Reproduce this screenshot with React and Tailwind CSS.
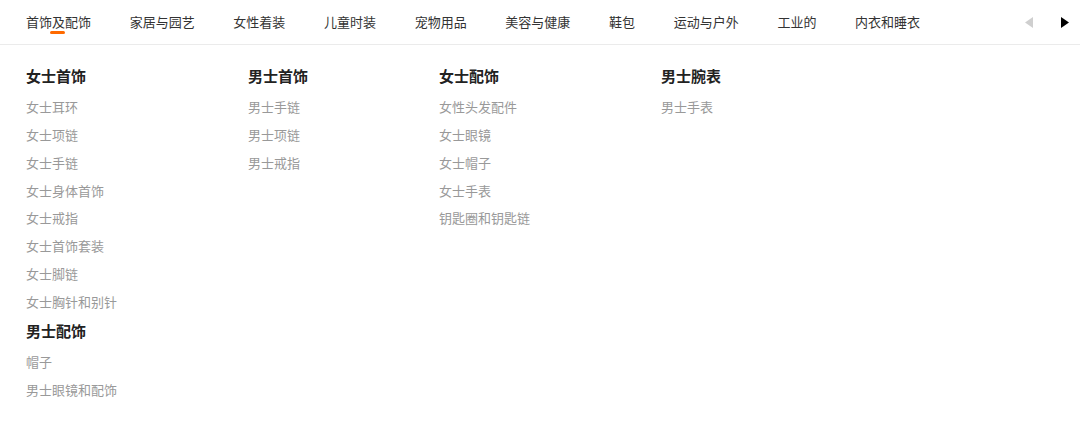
import React from "react";

const nav = ["首饰及配饰", "家居与园艺", "女性着装", "儿童时装", "宠物用品", "美容与健康", "鞋包", "运动与户外", "工业的", "内衣和睡衣"];

const columns = [
  {
    w: "w-[222px]",
    groups: [
      { title: "女士首饰", items: ["女士耳环", "女士项链", "女士手链", "女士身体首饰", "女士戒指", "女士首饰套装", "女士脚链", "女士胸针和别针"] },
      { title: "男士配饰", items: ["帽子", "男士眼镜和配饰"] },
    ],
  },
  { w: "w-[191px]", groups: [{ title: "男士首饰", items: ["男士手链", "男士项链", "男士戒指"] }] },
  { w: "w-[222px]", groups: [{ title: "女士配饰", items: ["女性头发配件", "女士眼镜", "女士帽子", "女士手表", "钥匙圈和钥匙链"] }] },
  { w: "w-[222px]", groups: [{ title: "男士腕表", items: ["男士手表"] }] },
];

export default function App() {
  return (
    <div
      className="w-[1080px] h-[422px] bg-white overflow-hidden"
      style={{ fontFamily: '"Microsoft YaHei", "Noto Sans CJK SC", "Noto Sans", sans-serif' }}
    >
      <div className="h-[45px] border-b border-[#ebebeb] flex items-start pl-[26px] pr-[12px]">
        <div className="flex gap-[38.67px] flex-1">
          {nav.map((n, i) => (
            <div key={n} className="relative h-[44px] flex items-center text-[13px] text-[#333] whitespace-nowrap">
              {n}
              {i === 0 && (
                <span className="absolute left-[24px] top-[31px] w-[15px] h-[3px] rounded-full bg-[#ff6a00]" />
              )}
            </div>
          ))}
        </div>
        <div className="flex items-center h-[44px] gap-[28px] pr-0 mr-[-1px]">
          <svg width="8" height="11" viewBox="0 0 8 11">
            <path d="M8 0 L8 11 L0 5.5 Z" fill="#cfcfcf" />
          </svg>
          <svg width="8" height="11" viewBox="0 0 8 11">
            <path d="M0 0 L0 11 L8 5.5 Z" fill="#000" />
          </svg>
        </div>
      </div>
      <div className="flex pl-[26px] pt-[14px]">
        {columns.map((c, ci) => (
          <div key={ci} className={`${c.w} flex flex-col`}>
            {c.groups.map((g, gi) => (
              <div key={g.title} className={`flex flex-col ${gi > 0 ? "mt-[-2px]" : ""}`}>
                <div className="h-[34px] leading-[34px] text-[15px] font-bold text-[#222]">{g.title}</div>
                {g.items.map((it) => (
                  <div key={it} className="h-[27.86px] leading-[27.86px] text-[13px] text-[#999] whitespace-nowrap">
                    {it}
                  </div>
                ))}
              </div>
            ))}
          </div>
        ))}
      </div>
    </div>
  );
}
